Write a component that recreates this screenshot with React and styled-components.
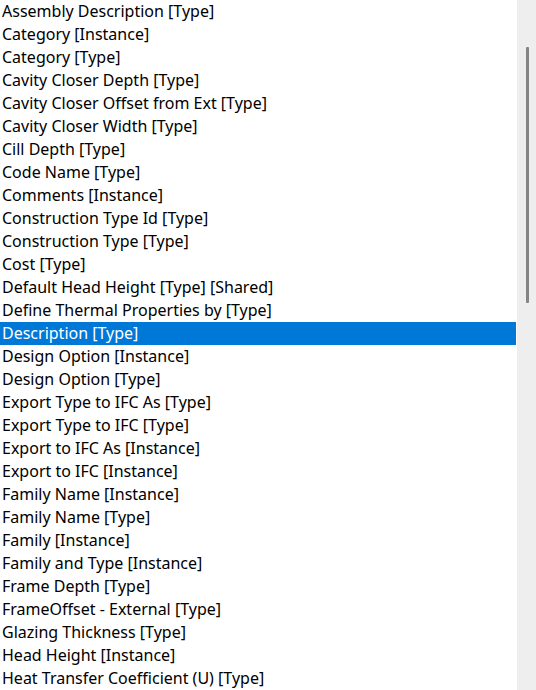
import React from "react";
import styled, { createGlobalStyle } from "styled-components";

const Global = createGlobalStyle`
  html, body { margin: 0; padding: 0; background: #fff; }
  body { font-family: "Noto Sans", "Open Sans", sans-serif; }
`;

const Frame = styled.div`
  display: flex;
  width: 536px;
  height: 690px;
  overflow: hidden;
  background: #fff;
`;

const List = styled.div`
  flex: 1;
  display: flex;
  flex-direction: column;
  min-width: 0;
`;

const Row = styled.div`
  height: 23px;
  flex: 0 0 23px;
  display: flex;
  align-items: center;
  padding-left: 2px;
  font-size: 16px;
  line-height: 23px;
  white-space: nowrap;
  color: ${(p) => (p.$selected ? "#fff" : "#000")};
  background: ${(p) => (p.$selected ? "#0078d7" : "transparent")};
`;

const Track = styled.div`
  width: 19px;
  margin-left: 1px;
  background: #eeeeee;
  display: flex;
  justify-content: center;
  padding-top: 47px;
`;

const Thumb = styled.div`
  width: 3px;
  height: 256px;
  margin-left: 1px;
  background: #858585;
  border-radius: 1px;
`;

const items = [
  "Assembly Description [Type]",
  "Category [Instance]",
  "Category [Type]",
  "Cavity Closer Depth [Type]",
  "Cavity Closer Offset from Ext [Type]",
  "Cavity Closer Width [Type]",
  "Cill Depth [Type]",
  "Code Name [Type]",
  "Comments [Instance]",
  "Construction Type Id [Type]",
  "Construction Type [Type]",
  "Cost [Type]",
  "Default Head Height [Type] [Shared]",
  "Define Thermal Properties by [Type]",
  "Description [Type]",
  "Design Option [Instance]",
  "Design Option [Type]",
  "Export Type to IFC As [Type]",
  "Export Type to IFC [Type]",
  "Export to IFC As [Instance]",
  "Export to IFC [Instance]",
  "Family Name [Instance]",
  "Family Name [Type]",
  "Family [Instance]",
  "Family and Type [Instance]",
  "Frame Depth [Type]",
  "FrameOffset - External [Type]",
  "Glazing Thickness [Type]",
  "Head Height [Instance]",
  "Heat Transfer Coefficient (U) [Type]",
];

export default function App() {
  return (
    <>
      <Global />
      <Frame>
        <List>
          {items.map((t, i) => (
            <Row key={i} $selected={i === 14}>
              {t}
            </Row>
          ))}
        </List>
        <Track>
          <Thumb />
        </Track>
      </Frame>
    </>
  );
}
